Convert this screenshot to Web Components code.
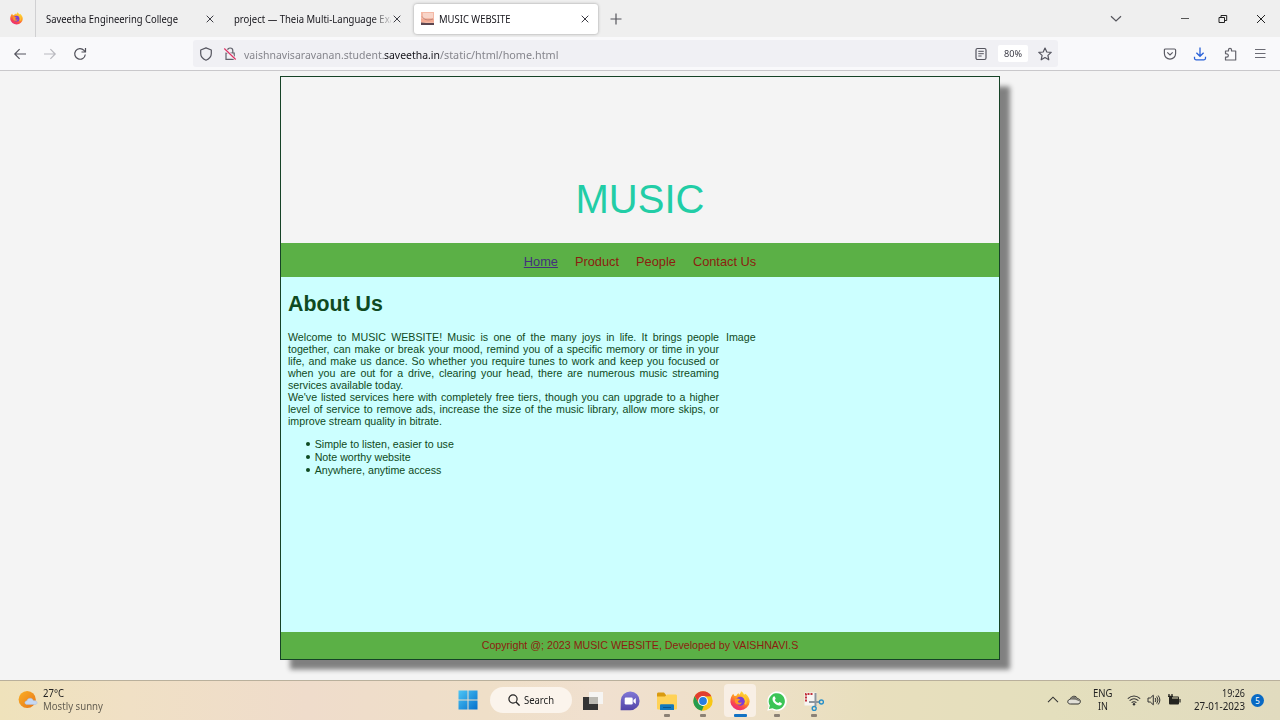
<!DOCTYPE html>
<html lang="en">
<head>
<meta charset="utf-8">
<title>MUSIC WEBSITE</title>
<style>
html,body{margin:0;height:100%;overflow:hidden;background:#f4f4f4}
</style>
</head>
<body>
<desktop-screen></desktop-screen>
<script>
const ICONS = {
  firefox: ['0 0 20 20', `<defs><linearGradient id="f" x1=".8" y1=".1" x2=".3" y2="1"><stop offset="0" stop-color="#ffdf38"/><stop offset=".45" stop-color="#ff9226"/><stop offset=".75" stop-color="#fa4450"/><stop offset="1" stop-color="#e62b7c"/></linearGradient></defs><path fill="url(#f)" d="M3.200 2.800 4.500 5 6.400 4.700C7 3.300 8 2.500 8.600 2.200L9.200 3.800C10.500 2.300 10.900 1.200 11 .2c2 1 2.800 2.400 3 3.600l1.400-1c2.500 2 4.300 4.500 4.300 7.800A9.700 9.200 0 0 1 .4 11.200C.3 7.500 1.400 4.800 3.200 2.800z"/><circle cx="10.300" cy="10.300" r="4.500" fill="#7b3fd6"/><path fill="#ff9a24" d="M4.800 8.300c2-1.400 3.800-.5 5.600.4-1 .2-1.300 1.100-2.500 1.300 0 2 2.700 2.300 4.100 1.200-1 3.300-5.800 3.100-7-.2z"/><path d="M13 5c2.700 2.300 3.500 5.500 2.300 8.300" stroke="#ffc62b" stroke-width="1.800" fill="none"/>`],
  close: ['0 0 10 10', `<path d="M1.700 1.700l6.600 6.600M8.300 1.700L1.700 8.300" stroke="#3c3c44" fill="none"/>`],
  wclose: ['0 0 10 10', `<path d="M1 1l8 8M9 1L1 9" stroke="#222" fill="none"/>`],
  min: ['0 0 10 10', `<path d="M1 4.500h8" stroke="#555"/>`],
  restore: ['0 0 10 10', `<path d="M1 3.500h5.500v5H1zM3 3.300V1.500h5.700v5H6.700" stroke="#222" stroke-width="1" fill="none"/>`],
  plus: ['0 0 12 12', `<path d="M6 .5v11M.5 6h11" stroke="#55555c" stroke-width="1.200"/>`],
  chev: ['0 0 12 12', `<path d="M1 3.200 6 8l5-4.800" stroke="#55555c" stroke-width="1.200" fill="none"/>`],
  up: ['0 0 12 12', `<path d="M1 8.200 6 3.200l5 5" stroke="#333" stroke-width="1.100" fill="none"/>`],
  fav: ['0 0 13 13', `<path fill="#f4b9a6" d="M0 0h13v13H0z"/><path fill="#f8d5c9" d="M2 1h10v5H2z"/><path fill="#f3ab94" d="M0 7h13v3H0z"/><path fill="#5b4650" d="M0 10.500 5 11h8v2H0z"/><path d="M1 4.500c2 3 5 4.500 11 2.500" stroke="#b57c72" stroke-width=".8" fill="none"/>`],
  back: ['0 0 14 14', `<path d="M13 7H1.800M6.600 2.200 1.800 7l4.800 4.800" stroke="#55555f" stroke-width="1.200" fill="none"/>`],
  fwd: ['0 0 14 14', `<path d="M1 7h11.200M7.400 2.200 12.200 7l-4.800 4.800" stroke="#b9b9bf" stroke-width="1.200" fill="none"/>`],
  reload: ['0 0 14 14', `<path d="M12.300 7.500A5.300 5.300 0 1 1 11 3.400l1.300 1.200M12.500 1v4H8.500" stroke="#505059" stroke-width="1.200" fill="none"/>`],
  shield: ['0 0 14 14', `<path d="M7 .9 12.300 3v3.500c0 3-2.300 5.500-5.300 6.700C4 12 1.700 9.500 1.700 6.500V3z" stroke="#55555f" stroke-width="1.200" stroke-linejoin="round" fill="none"/>`],
  lock: ['0 0 14 14', `<path d="M3 6h8.200v6.300H3zM4.400 6V3.700a2.700 2.700 0 0 1 5.400 0V6" stroke="#62626b" stroke-width="1.200" fill="none"/><path d="M1.300 1.500l11.400 11" stroke="#f0f0f4" stroke-width="2.800"/><path d="M1.300 1.500l11.400 11" stroke="#de3264" stroke-width="1.200"/>`],
  reader: ['0 0 14 14', `<rect x="2" y="1.500" width="10" height="11" rx="1.500" stroke="#55555f" stroke-width="1.200" fill="none"/><path d="M4.300 4.300h5.500M4.300 6.700h5.500M4.300 9h3.300" stroke="#55555f"/>`],
  star: ['0 0 14 14', `<path d="M7 1l1.800 4 4.400.4-3.300 3 .9 4.400L7 10.600l-3.800 2.200.9-4.400L.8 5.400 5.200 5z" stroke="#55555f" stroke-width="1.200" stroke-linejoin="round" fill="none"/>`],
  pocket: ['0 0 14 14', `<path d="M2.500 2h9c.7 0 1.100.4 1.100 1.100v3.400a5.600 5.600 0 0 1-11.200 0V3.100C1.400 2.400 1.800 2 2.500 2z M4.300 5.400 7 8l2.700-2.600" stroke="#5b5b64" stroke-width="1.200" fill="none"/>`],
  download: ['0 0 14 14', `<path d="M7 .6v8.600M3.400 5.800 7 9.300l3.600-3.500M1.500 9.800v1.500c0 1 .5 1.500 1.500 1.500h8c1 0 1.500-.5 1.500-1.500V9.800" stroke="#2a62d8" stroke-width="1.300" fill="none"/>`],
  puzzle: ['0 0 14 14', `<path d="M2.500 6.600V4h3V2.800a1.500 1.500 0 0 1 3 0V4h4.200v9H2.500v-2.800h1.200a1.500 1.500 0 0 0 0-3.300z" stroke="#62626b" stroke-width="1.200" stroke-linejoin="round" fill="none"/>`],
  menu: ['0 0 14 14', `<path d="M2 2.500h10.500M2 6.500h10.500M2 10.500h10.500" stroke="#6b6b74" stroke-width="1"/>`],
  weather: ['0 0 20 20', `<defs><linearGradient id="s" x1="0" y1="0" x2="1" y2="1"><stop stop-color="#fbb024"/><stop offset="1" stop-color="#e77418"/></linearGradient></defs><circle cx="9.200" cy="9.500" r="8.600" fill="url(#s)"/><path fill="#c6d8f3" stroke="#a4bce4" stroke-width=".5" d="M9.500 14.500c-3.500 0-3.300-3.500-.5-3.800.7-3 5.500-3.300 6.200-.2 4.500-.3 5 4 1.800 4z"/>`],
  start: ['0 0 20 20', `<defs><linearGradient id="w" x1="0" y1="0" x2="1" y2="1"><stop stop-color="#4cc5f5"/><stop offset="1" stop-color="#0470cc"/></linearGradient></defs><path fill="url(#w)" d="M.5.5h9v9h-9zM10.500.5h9v9h-9zM.5 10.500h9v9h-9zM10.500 10.500h9v9h-9z"/>`],
  search: ['0 0 12 12', `<circle cx="5" cy="5" r="4.100" stroke="#222" stroke-width="1.200" fill="none"/><path d="M8 8l3.600 3.600" stroke="#222" stroke-width="1.400"/>`],
  taskview: ['0 0 20 20', `<path fill="#f6f5f3" d="M6 1h14v12H6z"/><path fill="#343434" d="M0 6h15v13H0z"/><path fill="#bbb9b2" d="M6 6h9v7H6z"/>`],
  chat: ['0 0 20 20', `<defs><linearGradient id="c" x2="0" y2="1"><stop stop-color="#8178d6"/><stop offset="1" stop-color="#5245a8"/></linearGradient></defs><path fill="url(#c)" d="M.6 19.200.8 9.500a9.400 9.400 0 1 1 9.400 9.700z"/><rect x="4.700" y="6.500" width="8" height="7" rx="1.300" fill="#fff"/><path fill="#fff" d="m13.400 9 2.400-2v6l-2.400-2z"/>`],
  folder: ['0 0 20 20', `<path fill="#d99a10" d="M0 3c0-1 .5-1.500 1.500-1.500H7L9 4v3H0z"/><path fill="#ffd257" d="M0 5.500h8l2-2h8.500c1 0 1.500.5 1.500 1.500v12c0 1-.5 1.500-1.500 1.500h-17C.5 18.500 0 18 0 17z"/><path fill="#1479bd" d="M3 19v-4.500c0-.8.500-1.200 1.200-1.200h11.500c.8 0 1.300.5 1.300 1.200V19z"/><path fill="#0c568e" d="M6 16h8v1H6z"/>`],
  chrome: ['0 0 20 20', `<circle cx="10" cy="10" r="9.700" fill="#f8c715"/><path fill="#e13e30" d="M1.600 5.150A9.700 9.700 0 0 1 18.400 5.150L10 5.400 5.900 12.200z"/><path fill="#259b4f" d="M1.600 5.150 5.800 12.400 10 14.700l.8 0L8.900 19.640A9.700 9.700 0 0 1 1.600 5.150z"/><circle cx="10" cy="10" r="4.900" fill="#fff"/><circle cx="10" cy="10" r="3.900" fill="#287de0"/>`],
  whatsapp: ['0 0 20 20', `<path fill="#fff" d="M.3 19.800 1.700 15A9.700 9.700 0 1 1 5.200 18.500z"/><path fill="#3bc456" d="m1.900 18.100 1-3.500A8.100 8.100 0 1 1 5.500 17.200z"/><path fill="#fff" d="M6.100 5.900c.6-.8 1.500-.8 1.800-.1l.7 1.700c.2.5-.7 1.200-.8 1.500.7 1.500 1.900 2.500 3.400 3.100.5-.1 1-1.200 1.400-1.100l1.900.9c.7.3.2 1.700-.5 2.200-2 1.400-5-.4-6.600-2C5.900 10.600 4.800 7.500 6.100 5.900z"/>`],
  snip: ['0 0 20 20', `<path fill="#f7f5f3" d="M.5 1.500h12v13H.5z"/><path d="M2 10.500V3h7.500" stroke="#c2303b" stroke-width="2" stroke-dasharray="2 1" fill="none"/><path d="M11.500 2v13M5 11h11" stroke="#8d969d" stroke-width="2"/><circle cx="17.400" cy="11" r="2" stroke="#2790c9" stroke-width="1.400" fill="none"/><circle cx="10.200" cy="17.500" r="2" stroke="#2790c9" stroke-width="1.400" fill="none"/>`],
  cloud: ['0 0 14 14', `<path fill="#e2e0d8" stroke="#33332f" stroke-width="1" d="M3.500 11C-.2 11 0 6.500 3.300 6.300 4 2.500 9.500 2.200 10.300 5.700 14.300 5.600 14.200 11 11 11z"/><path fill="#77756c" d="M3.300 6.500c.8-3.500 5.800-3.700 6.700-.5 2 0 3 1 3 2.500L8.500 6.800z"/>`],
  wifi: ['0 0 14 14', `<path d="M.8 5.600q6.200-5.300 12.400 0M2.600 7.700q4.400-3.800 8.800 0M4.600 9.700q2.400-2 4.800 0" stroke="#333" stroke-width="1.100" fill="none"/><circle cx="7" cy="11.300" r="1.200" fill="#333"/>`],
  volume: ['0 0 14 14', `<path d="M1 5h2.300l3-2.800v9.600l-3-2.800H1zM8.200 5q1.300 2 0 4M9.700 3.500q2.600 3.500 0 7M11.200 2.500q3.300 4.500 0 9" stroke="#333" fill="none"/>`],
  battery: ['0 0 14 14', `<rect x="2" y="3.500" width="10" height="8" rx="1" fill="#24241f"/><path d="M13 6v3.500" stroke="#24241f" stroke-width="1.200"/><path fill="#e3ddbb" d="M5 4.500h6v1H5z"/><path d="M2 1v3M5 1v3M1 3.300h5M3.500 3v5" stroke="#24241f" stroke-width="1.300"/>`]
};

customElements.define('ui-icon', class extends HTMLElement {
  connectedCallback() {
    const [box, body] = ICONS[this.getAttribute('name')];
    const s = this.getAttribute('size') || 14;
    this.attachShadow({mode: 'open'}).innerHTML =
      `<style>:host{display:block;flex:none;width:${s}px;height:${s}px}svg{display:block}</style><svg width="${s}" height="${s}" viewBox="${box}">${body}</svg>`;
  }
});

/* A one-line label condensed or widened horizontally to fill a given width. */
customElements.define('fit-text', class extends HTMLElement {
  connectedCallback() {
    const w = +this.getAttribute('w');
    this.attachShadow({mode: 'open'}).innerHTML =
      `<style>:host{display:block;flex:none;white-space:nowrap;width:${w}px}span{display:inline-block;white-space:pre;transform-origin:0 50%}</style><span><slot></slot></span>`;
    const s = this.shadowRoot.querySelector('span');
    s.style.transform = `scaleX(${w / s.getBoundingClientRect().width})`;
  }
});

function element(name, html) {
  const t = document.createElement('template');
  t.innerHTML = html;
  customElements.define(name, class extends HTMLElement {
    constructor() {
      super();
      this.attachShadow({mode: 'open'}).append(t.content.cloneNode(true));
    }
  });
}

element('tab-strip', `<style>
:host{display:flex;height:37px;background:#efefef;align-items:center;box-sizing:border-box;padding-right:14px;font-size:10.600px;color:#15141a}
.pin{width:36px;height:37px;box-sizing:border-box;border-right:1px solid #d0d0d2;display:flex;align-items:center;padding-left:10px}
.tab{display:flex;align-items:center;width:188px;box-sizing:border-box;padding:0 9px 0 10px;justify-content:space-between}
.two{padding-right:10px}
.clip{width:157px;overflow:hidden;-webkit-mask-image:linear-gradient(90deg,#000 137px,transparent 160px)}
.on{width:184px;height:30px;margin-left:2px;padding:0 8px 0 7px;background:#fff;border-radius:3px;box-shadow:0 0 3px #999}
.on fit-text{margin:0 auto 0 5px}
.new{margin-left:12px}.sp{flex:1}.a{margin-right:58px}.b{margin-right:28px}
</style>
<div class="pin"><ui-icon name="firefox" size="13"></ui-icon></div>
<div class="tab"><fit-text w="132">Saveetha Engineering College</fit-text><ui-icon name="close" size="10"></ui-icon></div>
<div class="tab two"><div class="clip"><fit-text w="161">project — Theia Multi-Language Exa</fit-text></div><ui-icon name="close" size="10"></ui-icon></div>
<div class="tab on"><ui-icon name="fav" size="13"></ui-icon><fit-text w="71.500">MUSIC WEBSITE</fit-text><ui-icon name="close" size="10"></ui-icon></div>
<ui-icon class="new" name="plus" size="12"></ui-icon><div class="sp"></div>
<ui-icon class="a" name="chev" size="12"></ui-icon><ui-icon class="b" name="min" size="10"></ui-icon><ui-icon class="b" name="restore" size="10"></ui-icon><ui-icon name="wclose" size="10"></ui-icon>`);

element('nav-toolbar', `<style>
:host{display:flex;height:34px;box-sizing:border-box;background:#f9f9fb;border-bottom:1px solid #c9c8cb;align-items:center;padding:0 13px}
.group{display:flex;gap:16px}
.url{display:flex;align-items:center;width:865px;height:27px;box-sizing:border-box;margin-left:106px;padding:0 6px;background:#f0f0f4;border-radius:3px;font-size:11.600px;color:#85858c}
.addr{display:flex;margin:1px auto 0 7px}
.addr b{font-weight:400;color:#15141a}
.lock{margin-left:9.500px}
.zoom{width:30px;height:17px;background:#fff;border-radius:2px;margin:0 10px;display:flex;align-items:center;justify-content:center;font-size:9.300px;color:#3b3b46}
.right{margin-left:auto}
</style>
<div class="group"><ui-icon name="back"></ui-icon><ui-icon name="fwd"></ui-icon><ui-icon name="reload"></ui-icon></div>
<div class="url"><ui-icon name="shield"></ui-icon><ui-icon class="lock" name="lock"></ui-icon>
<div class="addr"><fit-text w="140.500">vaishnavisaravanan.student.</fit-text><b><fit-text w="56">saveetha.in</fit-text></b><fit-text w="118.500">/static/html/home.html</fit-text></div>
<ui-icon name="reader"></ui-icon><div class="zoom"><fit-text w="18">80%</fit-text></div><ui-icon name="star"></ui-icon></div>
<div class="group right"><ui-icon name="pocket"></ui-icon><ui-icon name="download"></ui-icon><ui-icon name="puzzle"></ui-icon><ui-icon name="menu"></ui-icon></div>`);

element('music-page', `<style>
:host{display:block;height:609px;box-sizing:border-box;padding-top:5px;background:#f4f4f4;font-family:"Liberation Sans",Arial,sans-serif;font-size:10.667px;color:#0f4a22}
.card{display:flex;flex-direction:column;width:720px;height:584px;box-sizing:border-box;margin:0 auto;border:1px solid #164326;background:#f4f4f4;box-shadow:10px 9.500px 5px #808080}
header{height:166px;box-sizing:border-box;padding-top:99px;text-align:center;font-size:40px;line-height:46px;color:#22cda6}
nav{height:34px;box-sizing:border-box;padding-top:2px;background:#5bb046;display:flex;justify-content:center;align-items:center;gap:17px;font-size:12.800px;color:#8c1d10}
.home{color:#44307c;text-decoration:underline}
main{flex:1;background:#cff;padding:0 7px}
h1{font-size:21.333px;line-height:24px;margin:15px 0 15px}
.row{display:flex;gap:7px}
.text{width:431px;text-align:justify;line-height:12px}
p{margin:0}
ul{margin:11px 0 0;padding-left:26.667px;line-height:13px;list-style:none}
li::before{content:"";display:inline-block;width:4px;height:4px;border-radius:50%;background:#0f4a22;margin:0 5px 2px -9px}
footer{height:27px;background:#5bb046;color:#8c1d10;text-align:center;line-height:27px}
</style>
<div class="card"><header>MUSIC</header>
<nav><span class="home">Home</span><span>Product</span><span>People</span><span>Contact Us</span></nav>
<main><h1>About Us</h1><div class="row"><div class="text">
<p>Welcome to MUSIC WEBSITE! Music is one of the many joys in life. It brings people together, can make or break your mood, remind you of a specific memory or time in your life, and make us dance. So whether you require tunes to work and keep you focused or when you are out for a drive, clearing your head, there are numerous music streaming services available today.</p>
<p>We've listed services here with completely free tiers, though you can upgrade to a higher level of service to remove ads, increase the size of the music library, allow more skips, or improve stream quality in bitrate.</p>
<ul><li>Simple to listen, easier to use</li><li>Note worthy website</li><li>Anywhere, anytime access</li></ul></div>
<div>Image</div></div></main>
<footer>Copyright @; 2023 MUSIC WEBSITE, Developed by VAISHNAVI.S</footer></div>`);

element('task-item', `<style>
:host{display:flex;flex-direction:column;align-items:center;justify-content:flex-end;width:32px;height:33px;border-radius:4px}
:host([active]){background:#f8efe5}
i{width:6px;height:3px;border-radius:1px;margin-top:3px;background:transparent}
:host([open]) i{background:#8b8175}
:host([active]) i{width:13px;background:#1272c4}
</style><slot></slot><i></i>`);

element('task-bar', `<style>
:host{display:flex;height:40px;box-sizing:border-box;padding-bottom:1px;border-top:1px solid #b9b09c;background:linear-gradient(90deg,#efe2bb 0,#f0e0c5 10%,#efdccb 24%,#efdfc8 38%,#f0e0cf 47%,#eee0c8 58%,#e8dfbd 68%,#e4dfbd 82%,#e1dbbf 100%);font-size:10.300px;color:#222}
.weather{display:flex;align-items:center;padding-left:18px;gap:5px;width:435px;line-height:13px}
.weather em{font-style:normal;color:#655f52}
.apps{display:flex;align-items:center;gap:4.700px;width:400px}
.pill{width:82px;height:26px;border-radius:13px;background:#fbf4ec;display:flex;align-items:center;justify-content:center;gap:4px}
.start{margin-left:4.500px;margin-right:7.500px}
.pill{margin-right:1px}
.tray{display:flex;align-items:center;margin-left:auto;padding-right:16px}
.col{display:flex;flex-direction:column;align-items:center;line-height:13px}
.r{align-items:flex-end}
.badge{width:13px;height:13px;border-radius:50%;background:#0869c4;color:#fff;font-size:8px;line-height:13px;text-align:center;margin-left:6.500px}
</style>
<div class="weather"><ui-icon name="weather" size="20"></ui-icon><div><fit-text w="21">27°C</fit-text><em><fit-text w="60">Mostly sunny</fit-text></em></div></div>
<div class="apps"><ui-icon class="start" name="start" size="20"></ui-icon>
<div class="pill"><ui-icon name="search" size="12"></ui-icon><fit-text w="30">Search</fit-text></div>
<task-item><ui-icon name="taskview" size="20"></ui-icon></task-item>
<task-item><ui-icon name="chat" size="20"></ui-icon></task-item>
<task-item open><ui-icon name="folder" size="20"></ui-icon></task-item>
<task-item open><ui-icon name="chrome" size="20"></ui-icon></task-item>
<task-item open active><ui-icon name="firefox" size="20"></ui-icon></task-item>
<task-item open><ui-icon name="whatsapp" size="20"></ui-icon></task-item>
<task-item open><ui-icon name="snip" size="20"></ui-icon></task-item></div>
<div class="tray"><ui-icon name="up" size="12"></ui-icon><ui-icon name="cloud" style="margin:0 12px 0 8px"></ui-icon>
<div class="col"><fit-text w="19.500">ENG</fit-text><fit-text w="10">IN</fit-text></div>
<ui-icon name="wifi" style="margin-left:14px"></ui-icon><ui-icon name="volume" style="margin:0 6px"></ui-icon><ui-icon name="battery"></ui-icon>
<div class="col r" style="margin-left:13px"><fit-text w="23">19:26</fit-text><fit-text w="51">27-01-2023</fit-text></div>
<div class="badge">5</div></div>`);

element('desktop-screen', `<style>
:host{display:flex;flex-direction:column;width:1280px;height:720px;overflow:hidden;font-family:"Noto Sans","Open Sans",sans-serif}
music-page{flex:1}
</style><tab-strip></tab-strip><nav-toolbar></nav-toolbar><music-page></music-page><task-bar></task-bar>`);
</script>
</body>
</html>
